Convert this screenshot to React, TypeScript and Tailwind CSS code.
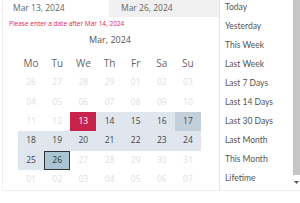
import React from 'react'

const MENU = [
  'Today', 'Yesterday', 'This Week', 'Last Week', 'Last 7 Days',
  'Last 14 Days', 'Last 30 Days', 'Last Month', 'This Month', 'Lifetime',
]

const DAYS = ['Mo', 'Tu', 'We', 'Th', 'Fr', 'Sa', 'Su']

type Cell = { d: string; kind: 'off' | 'start' | 'range' | 'hover' | 'end' }

const off = (d: string): Cell => ({ d, kind: 'off' })
const rng = (d: string): Cell => ({ d, kind: 'range' })

const ROWS: Cell[][] = [
  ['26', '27', '28', '29', '01', '02', '03'].map(off),
  ['04', '05', '06', '07', '08', '09', '10'].map(off),
  [off('11'), off('12'), { d: '13', kind: 'start' }, rng('14'), rng('15'), rng('16'), { d: '17', kind: 'hover' }],
  ['18', '19', '20', '21', '22', '23', '24'].map(rng),
  [rng('25'), { d: '26', kind: 'end' }, off('27'), off('28'), off('29'), off('30'), off('31')],
  ['01', '02', '03', '04', '05', '06', '07'].map(off),
]

const cellClass: Record<Cell['kind'], string> = {
  off: 'text-[#e0e0e0]',
  start: 'bg-[#c8234c] text-white',
  range: 'bg-[#dfe6ee] text-[#444]',
  hover: 'bg-[#c3d0dc] text-[#444]',
  end: 'bg-[#a9c4d3] text-[#333] border border-[#333]',
}

export default function App() {
  return (
    <div className="w-[300px] h-[203px] flex bg-white overflow-hidden font-['Open_Sans',sans-serif]">
      {/* calendar side */}
      <div className="w-[217px] flex flex-col border-b border-[#eeeeee] h-[191px] border-l border-l-[#f0f0f0] ml-[2px]">
        <div className="h-[17px] flex text-[8.5px] text-[#666] leading-[15px]">
          <div className="w-[106px] pl-[10px]">Mar 13, 2024</div>
          <div className="flex-1 bg-[#f0f0f0] pl-[12px]">Mar 26, 2024</div>
        </div>
        <div className="pl-[6px] mt-[3px] text-[6.5px] leading-[8px] text-[#e0245e]">
          Please enter a date after Mar 14, 2024
        </div>
        <div className="mt-[6px] text-center text-[9px] leading-[12px] text-[#555] pr-[2px]">Mar, 2024</div>
        <div className="ml-[15px] w-[183px] mt-[8px]">
          <div className="grid grid-cols-7 h-[19px] items-center text-center text-[10px] text-[#666]">
            {DAYS.map(d => <div key={d}>{d}</div>)}
          </div>
          {ROWS.map((row, i) => (
            <div key={i} className="grid grid-cols-7 h-[19.4px] text-[8.5px]">
              {row.map((c, j) => (
                <div key={j} className={`flex items-center justify-center ${cellClass[c.kind]}`}>{c.d}</div>
              ))}
            </div>
          ))}
        </div>
      </div>

      {/* preset menu */}
      <div className="w-[71px] h-[191px] border-l border-[#e6e6e6] border-b border-b-[#eeeeee] flex flex-col font-['Lato',sans-serif]">
        {MENU.map(m => (
          <div key={m} className="h-[19px] leading-[14px] pl-[5px] text-[8.5px] text-[#555]">{m}</div>
        ))}
      </div>

      {/* scrollbar */}
      <div className="flex-1 flex flex-col h-[191px] border-b border-[#eeeeee] pl-[3px]">
        <div className="h-[175px] bg-[#c6c6c6]" />
        <div className="flex-1 flex items-center justify-center">
          <svg width="5" height="3" viewBox="0 0 5 3"><path d="M0 0h5L2.5 3z" fill="#555" /></svg>
        </div>
      </div>
    </div>
  )
}
